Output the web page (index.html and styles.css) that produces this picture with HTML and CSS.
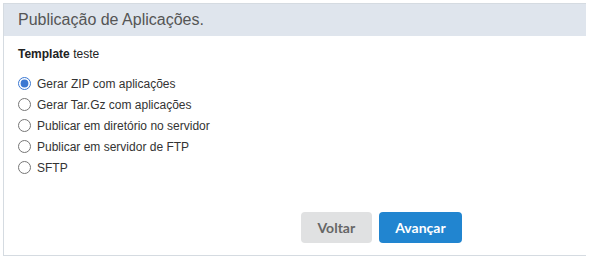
FILE: index.html
```html
<!DOCTYPE html>
<html lang="pt">
<head>
    <meta charset="UTF-8">
    <title>Publicação de Aplicações</title>
    <link rel="stylesheet" href="styles.css">
</head>
<body>
    <div class="panel">
        <div class="panel-header">Publicação de Aplicações.</div>
        <div class="panel-body">
            <div class="template"><b>Template</b> teste</div>
            <form class="options">
                <label class="option"><input type="radio" name="pub" checked> Gerar ZIP com aplicações</label>
                <label class="option"><input type="radio" name="pub"> Gerar Tar.Gz com aplicações</label>
                <label class="option"><input type="radio" name="pub"> Publicar em diretório no servidor</label>
                <label class="option"><input type="radio" name="pub"> Publicar em servidor de FTP</label>
                <label class="option"><input type="radio" name="pub"> SFTP</label>
            </form>
            <div class="actions">
                <button class="btn btn-back">Voltar</button>
                <button class="btn btn-next">Avançar</button>
            </div>
        </div>
    </div>
</body>
</html>
```

FILE: styles.css
```css
* {
    margin: 0;
    padding: 0;
    box-sizing: border-box;
}

body {
    margin: 3px;
    font-family: "Liberation Sans", Arial, sans-serif;
    color: #333;
    background: #fff;
}

/* Panel */
.panel {
    width: 585px;
    border: 1px solid #d5dbe1;
}

.panel-header {
    height: 32px;
    line-height: 32px;
    padding-left: 14px;
    background: #dfe5ed;
    color: #555;
    font-size: 16px;
}

.panel-body {
    padding: 11px 14px 12px 14px;
}

.template {
    font-size: 12px;
    line-height: 15px;
    color: #222;
}

/* Radio list */
.options {
    margin-top: 11px;
    display: flex;
    flex-direction: column;
}

.option {
    display: flex;
    align-items: center;
    gap: 6px;
    height: 21px;
    font-size: 12px;
    color: #333;
}

.option input {
    width: 13px;
    height: 13px;
    margin: 0;
    accent-color: #3b78d2;
}

/* Buttons */
.actions {
    margin-top: 34px;
    padding-left: 283px;
    display: flex;
    gap: 7px;
}

.btn {
    height: 31px;
    padding: 0 16.5px;
    border: none;
    border-radius: 4px;
    font-family: Lato, "Liberation Sans", sans-serif;
    font-weight: bold;
    font-size: 14px;
    cursor: pointer;
}

.btn-back {
    background: #e0e1e2;
    color: #666;
}

.btn-next {
    background: #2185d0;
    color: #fff;
}
```
